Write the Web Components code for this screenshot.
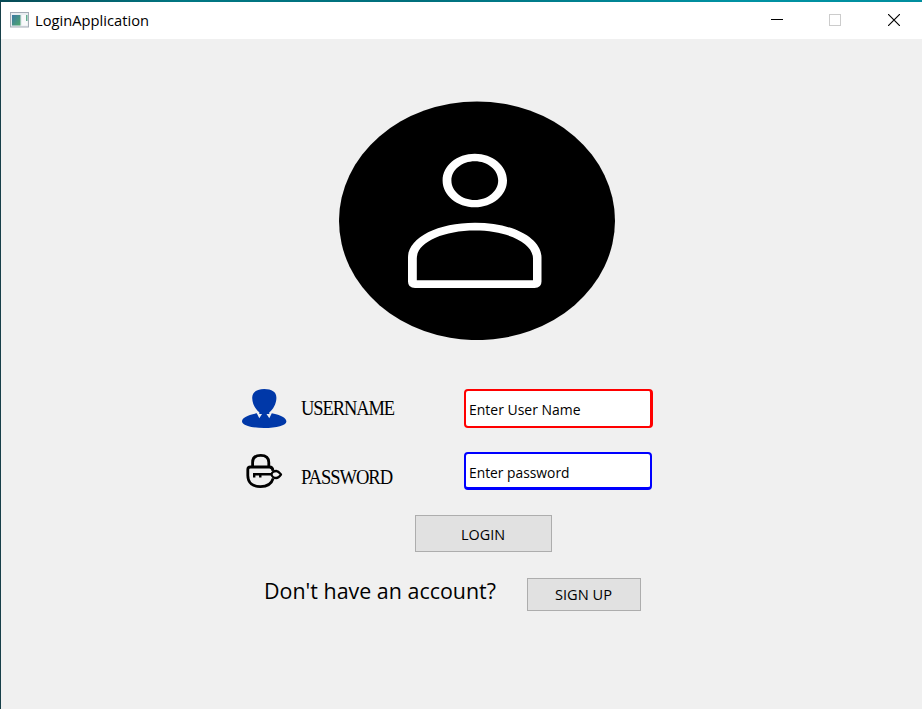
<!DOCTYPE html>
<html lang="en">
<head>
<meta charset="utf-8">
<title>LoginApplication</title>
<style>html,body{margin:0;height:100%;overflow:hidden;background:#f0f0f0}</style>
</head>
<body>
<login-window></login-window>
<script>
const define = (name, markup, setup) => {
  const t = document.createElement('template');
  t.innerHTML = markup;
  customElements.define(name, class extends HTMLElement {
    constructor() {
      super();
      this.attachShadow({mode: 'open'}).append(t.content.cloneNode(true));
    }
    connectedCallback() { if (setup) setup(this, this.shadowRoot); }
  });
};

/* One line of text set to an exact advance width. */
define('fit-text', `
<style>
:host{display:block;flex:none;font-family:"Open Sans","Noto Sans",sans-serif;color:#000}
:host([curly]){font-family:"Liberation Serif",serif;letter-spacing:-1.2px}
svg{display:block;overflow:visible}
</style>
<svg><text x="0" fill="currentColor" lengthAdjust="spacingAndGlyphs"></text></svg>`, (el, root) => {
  const size = +el.getAttribute('size'), w = el.getAttribute('width');
  const svg = root.querySelector('svg'), text = root.querySelector('text');
  svg.setAttribute('width', w);
  svg.setAttribute('height', size);
  text.setAttribute('y', size);
  text.setAttribute('font-size', size);
  text.setAttribute('textLength', w);
  text.textContent = el.getAttribute('text');
});

define('title-bar', `
<style>
:host{display:flex;height:37px;background:#fff;align-items:flex-start}
.app{margin:10px 0 0 9px;width:19px;height:16px}
fit-text{margin:9px 0 0 5.5px}
.controls{display:flex;margin-left:auto;gap:46px;padding:12px 22px 0 0}
.controls svg:last-child{margin-left:1px}
svg{display:block;flex:none}
</style>
<svg class="app" viewBox="0 0 19 16">
  <defs><linearGradient id="g" x2="1" y2="1"><stop stop-color="#3b78a4"/><stop offset="1" stop-color="#4fa86b"/></linearGradient></defs>
  <rect x=".5" y=".5" width="18" height="14.5" fill="#e9edf1" stroke="#a3abb5"/>
  <rect x="2" y="3" width="8.500" height="10.5" fill="url(#g)"/>
  <rect x="12" y="3" width="5.5" height="10.5" fill="#f8f9fa"/>
  <rect x="16" y="3" width="1.5" height="6" fill="#63ad91"/>
</svg>
<fit-text text="LoginApplication" size="15" width="114"></fit-text>
<div class="controls">
  <svg width="12" height="12"><path d="M0 5.500H12" stroke="#000"/></svg>
  <svg width="12" height="12"><rect x=".5" y=".5" width="11" height="11" fill="none" stroke="#ccc"/></svg>
  <svg width="12" height="12"><path d="M0 0L12 12M12 0L0 12" stroke="#000" stroke-width="1.15"/></svg>
</div>`);

define('profile-picture', `
<style>:host{display:block;width:276px;height:239px}svg{display:block}</style>
<svg width="276" height="239" viewBox="339 101 276 239">
  <ellipse cx="477" cy="220.800" rx="138" ry="119.300"/>
  <path fill="#fff" fill-rule="evenodd" d="M474.800 153.800C492.600 153.800 507 165.700 507 180.500S492.600 207.300 474.800 207.300S442.600 195.300 442.600 180.500S457 153.800 474.800 153.800ZM474.800 161.200C461.900 161.200 451.400 169.800 451.400 180.500S461.900 200 474.800 200S498.200 191.200 498.200 180.500S487.700 161.200 474.800 161.200Z"/>
  <path fill="#fff" fill-rule="evenodd" d="M475 222.700C513 222.700 541.500 238 541.500 257.500V281.500Q541.500 288 534.500 288H415Q408 288 408 281.500V257.500C408 238 437 222.700 475 222.700ZM475 230.600C443 230.600 416.800 242.500 416.800 258.500V280.200H533V258.500C533 242.500 507 230.600 475 230.600Z"/>
</svg>`);

define('user-icon', `
<style>:host{display:block;width:45px;height:40px}svg{display:block}</style>
<svg width="45" height="40" viewBox="242 388 45 40" fill="#0038a8">
  <path d="M264.300 389C271.800 389 276.600 392 276.400 398C276.300 404 273 409.500 269.300 412.300V414H259.300V412.300C255.500 409.500 252.300 404 252.200 398C252.100 392 257 389 264.300 389Z"/>
  <path d="M256.800 413.300C247 415 242 418 242 421.500C242 425.500 252 428 264.200 428S286.400 425.500 286.400 421.500C286.400 418 281 415 271.800 413.300L269.300 418.300L266 413.300H262.500L259.300 418.300Z"/>
</svg>`);

define('lock-icon', `
<style>:host{display:block;width:37px;height:36px}svg{display:block}</style>
<svg width="37" height="36" viewBox="246 453 37 36" fill="none" stroke="#000" stroke-width="2.800" stroke-linejoin="round">
  <path d="M252.600 466.500V462.500C252.600 457.800 255.800 455.300 260.700 455.300S268.800 457.800 268.800 462.500V466.500"/>
  <path d="M273 470.800C272.700 468 271.800 467 269.500 467H250.500Q247.800 467 247.800 469.500V475.500C247.800 483 253 486.600 260.500 486.600C267 486.600 271.600 483.500 273.200 478.300"/>
  <path d="M271.500 474.400C271.800 472.500 274 471 276.300 471C278.500 471 279.700 472.800 281 474.500C279.700 476.300 278.500 478 276.300 478C274 478 271.800 476.500 271.500 474.400Z" stroke-width="2.300"/>
  <path d="M271 474.300H254.200V477.500M260.300 474.300V477.500" stroke-width="2.400" stroke-linejoin="miter"/>
</svg>`);

define('text-field', `
<style>
:host{display:block;box-sizing:border-box;width:189px;height:39px;background:#fff;border:2px solid var(--edge);border-right-width:3px;border-bottom-width:2.600px;border-radius:4px;padding:9px 0 0 2.500px}
:host([small]){width:188px;height:38px;border-right-width:2px;border-bottom-width:3px}
</style><slot></slot>`);

define('push-button', `
<style>
:host{display:flex;box-sizing:border-box;justify-content:center;background:#e1e1e1;border:1px solid #adadad}
</style><slot></slot>`);

define('login-window', `
<style>
:host{display:flex;flex-direction:column;box-sizing:border-box;width:922px;height:709px;background:#f0f0f0;border-left:1px solid #173f49}
.desktop{height:2px;margin-left:-1px;flex:none;background:linear-gradient(90deg,#064a55,#007783 20%,#006f7c 45%,#0092a3 80%,#008e9e)}
title-bar{flex:none}
profile-picture{margin:62px 0 0 338px}
.row{display:flex;align-items:flex-start;flex:none}
.user{margin:48px 0 0 241px;height:40px}
.user fit-text[curly]{margin:6px 0 0 14px}
.user text-field{margin:1px 0 0 70px}
.pass{margin:24px 0 0 245px;height:38px}
.pass lock-icon{margin-top:1px}
.pass fit-text[curly]{margin:11px 0 0 18px}
.pass text-field{margin-left:72px;--edge:#00f}
.user text-field{--edge:#f00}
.login{margin:25px 0 0 414px;width:137px;height:37px;padding:9px 1px 0 0;flex:none}
.sign{margin:26px 0 0 263px;height:33px}
.sign>fit-text{margin-top:-2px}
.sign push-button{margin-left:31px;width:114px;height:33px;padding:6px 1px 0 0}
</style>
<div class="desktop"></div>
<title-bar></title-bar>
<profile-picture></profile-picture>
<div class="row user"><user-icon></user-icon><fit-text curly text="USERNAME" size="21" width="93"></fit-text>
<text-field><fit-text text="Enter User Name" size="15" width="111.500"></fit-text></text-field></div>
<div class="row pass"><lock-icon></lock-icon><fit-text curly text="PASSWORD" size="21" width="91"></fit-text>
<text-field small><fit-text text="Enter password" size="15" width="100.500"></fit-text></text-field></div>
<push-button class="login"><fit-text text="LOGIN" size="15" width="44"></fit-text></push-button>
<div class="row sign"><fit-text text="Don't have an account?" size="22.500" width="232"></fit-text>
<push-button><fit-text text="SIGN UP" size="15" width="57"></fit-text></push-button></div>`);
</script>
</body>
</html>
